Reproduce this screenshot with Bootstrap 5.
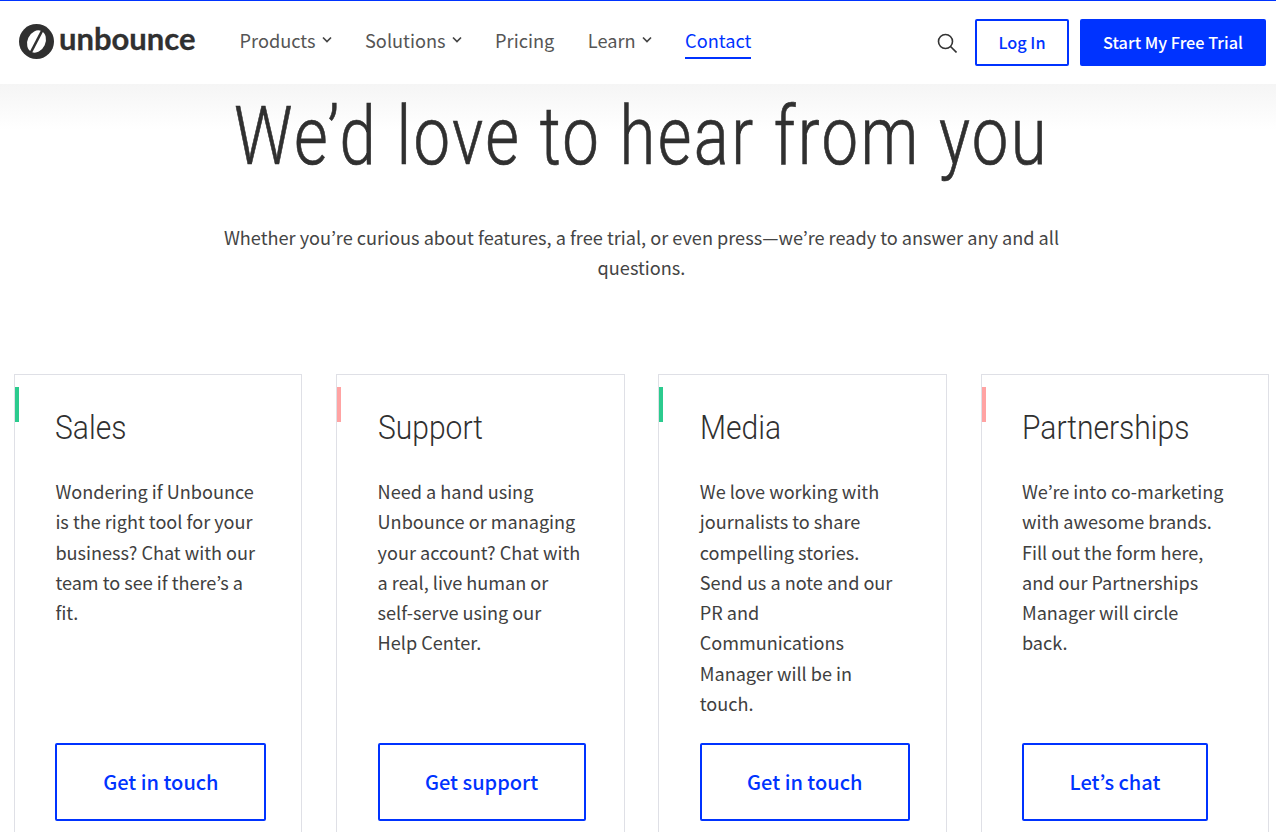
<!DOCTYPE html>
<html lang="en">
<head>
  <meta charset="UTF-8" />
  <meta name="viewport" content="width=device-width, initial-scale=1" />
  <title>Contact Unbounce</title>
  <link href="https://cdn.jsdelivr.net/npm/bootstrap@5.3.0/dist/css/bootstrap.min.css" rel="stylesheet" />
  <style>
    html, body { height: 832px; overflow: hidden; }
    body { font-family: "Noto Sans CJK KR", "Noto Sans", sans-serif; color: #303030; background: #fff; }
    .site-head { height: 84px; border-top: 1px solid #0033ff; background: #fff; padding: 0 10px 0 19px; }
    .brand-mark { width: 35px; height: 35px; flex: none; margin-top: -2px; }
    .brand-name { font-family: Lato, sans-serif; font-weight: 700; font-size: 31px; line-height: 1; color: #303030; margin-left: 5px; margin-top: -8px; -webkit-text-stroke: .3px #303030; }
    .main-links { margin-left: 44px; gap: 33.500px; margin-top: -4px; }
    .main-links a { color: #555; font-size: 18.200px; line-height: 34px; height: 36px; border-bottom: 2px solid transparent; text-decoration: none; display: flex; align-items: center; gap: 6px; }
    .main-links a.is-active { color: #0033ff; border-bottom-color: #0033ff; }
    .search-ico { width: 20px; height: 20px; margin-right: 18px; }
    .btn-login, .btn-trial { height: 47px; border-radius: 2px; font-size: 16.300px; font-weight: 500; display: flex; align-items: center; justify-content: center; padding: 0; }
    .btn-login { width: 94px; border: 2px solid #0033ff; color: #0033ff; background: #fff; margin-right: 11px; }
    .btn-trial { width: 186px; border: 0; background: #0033ff; color: #fff; }
    .hero-zone { background: linear-gradient(#f5f5f5, #fff 46px); height: 290px; text-align: center; padding-left: 7px; }
    .hero-title { font-family: Roboto, sans-serif; font-weight: 300; font-size: 82px; letter-spacing: 3px; line-height: 100px; color: #303030; margin: 0; padding-top: 2px; transform: scaleX(.795); white-space: nowrap; -webkit-text-stroke: .7px #303030; }
    .hero-text { font-size: 18.150px; line-height: 30px; color: #444; width: 850px; margin: 36px auto 0; }
    .offer-row { gap: 33.800px; padding: 0 7px 0 14px; }
    .offer-box { position: relative; width: 288.400px; height: 480px; flex: none; border: 1px solid #dfe0e6; border-bottom: 0; padding: 31px 35px 0 40.400px; }
    .offer-box::before { content: ""; position: absolute; left: 0; top: 12px; width: 4px; height: 35px; background: #2bcb8e; }
    .offer-box.is-pink::before { background: #ffa3a3; }
    .offer-title { font-family: Roboto, sans-serif; font-weight: 300; font-size: 33px; line-height: 44px; color: #303030; margin: 0; transform: scaleX(.91); transform-origin: left; white-space: nowrap; }
    .offer-text { font-size: 18.100px; line-height: 30.300px; color: #404040; margin: 26px 0 0; height: 267px; width: 205px; }
    .btn-offer { height: 78px; border: 2px solid #0033ff; border-radius: 2px; color: #0033ff; background: #fff; font-size: 20px; font-weight: 500; display: flex; align-items: center; justify-content: center; padding: 0; }
  </style>
</head>
<body>
  <header class="site-head d-flex align-items-center">
    <svg class="brand-mark" viewBox="0 0 35 35">
      <circle cx="17.500" cy="17.500" r="17.500" fill="#303030" />
      <ellipse cx="17.500" cy="17.500" rx="9" ry="11.500" transform="rotate(25 17.500 17.500)" fill="#fff" />
      <path d="M24 5 11 30" stroke="#303030" stroke-width="2.600" fill="none" />
    </svg>
    <span class="brand-name">unbounce</span>
    <nav class="main-links d-flex">
      <a href="#">Products <svg width="10" height="7" viewBox="0 0 10 7"><path d="M1 1.500l4 4 4-4" stroke="#444" stroke-width="1.700" fill="none" /></svg></a>
      <a href="#">Solutions <svg width="10" height="7" viewBox="0 0 10 7"><path d="M1 1.500l4 4 4-4" stroke="#444" stroke-width="1.700" fill="none" /></svg></a>
      <a href="#">Pricing</a>
      <a href="#">Learn <svg width="10" height="7" viewBox="0 0 10 7"><path d="M1 1.500l4 4 4-4" stroke="#444" stroke-width="1.700" fill="none" /></svg></a>
      <a href="#" class="is-active">Contact</a>
    </nav>
    <div class="ms-auto d-flex align-items-center">
      <svg class="search-ico" viewBox="0 0 20 20"><circle cx="8.500" cy="8.500" r="7" stroke="#333" stroke-width="1.600" fill="none" /><path d="M13.500 13.500 19.500 19.500" stroke="#333" stroke-width="1.600" /></svg>
      <button class="btn btn-login">Log In</button>
      <button class="btn btn-trial">Start My Free Trial</button>
    </div>
  </header>

  <section class="hero-zone">
    <h1 class="hero-title">We’d love to hear from you</h1>
    <p class="hero-text">Whether you’re curious about features, a free trial, or even press—we’re ready to answer any and all questions.</p>
  </section>

  <section class="offer-row d-flex">
    <div class="offer-box">
      <h2 class="offer-title">Sales</h2>
      <p class="offer-text">Wondering if Unbounce is the right tool for your business? Chat with our team to see if there’s a fit.</p>
      <button class="btn btn-offer" style="width: 211px">Get in touch</button>
    </div>
    <div class="offer-box is-pink">
      <h2 class="offer-title">Support</h2>
      <p class="offer-text">Need a hand using Unbounce or managing your account? Chat with a real, live human or self-serve using our Help Center.</p>
      <button class="btn btn-offer" style="width: 208px">Get support</button>
    </div>
    <div class="offer-box">
      <h2 class="offer-title">Media</h2>
      <p class="offer-text">We love working with journalists to share compelling stories. Send us a note and our PR and Communications Manager will be in touch.</p>
      <button class="btn btn-offer" style="width: 210px">Get in touch</button>
    </div>
    <div class="offer-box is-pink">
      <h2 class="offer-title">Partnerships</h2>
      <p class="offer-text">We’re into co-marketing with awesome brands. Fill out the form here, and our Partnerships Manager will circle back.</p>
      <button class="btn btn-offer" style="width: 186px">Let’s chat</button>
    </div>
  </section>
  <script src="https://cdn.jsdelivr.net/npm/bootstrap@5.3.0/dist/js/bootstrap.bundle.min.js"></script>
</body>
</html>
